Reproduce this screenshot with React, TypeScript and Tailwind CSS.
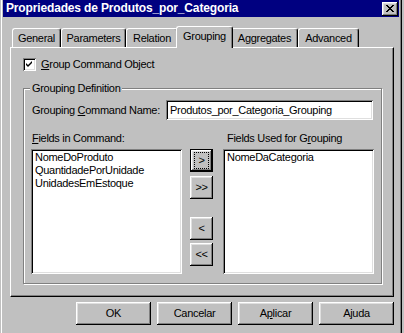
import React from "react";

const raised =
  "shadow-[inset_-1px_-1px_#000,inset_1px_1px_#fff,inset_-2px_-2px_#808080,inset_2px_2px_#dfdfdf]";
const sunken =
  "shadow-[inset_1px_1px_#808080,inset_-1px_-1px_#fff,inset_2px_2px_#000,inset_-2px_-2px_#dfdfdf]";

type Tab = { label: string; cls: string; sel?: boolean };

const tabs: Tab[] = [
  { label: "General", cls: "w-[49px]" },
  { label: "Parameters", cls: "w-[65px]" },
  { label: "Relation", cls: "w-[52px]" },
  { label: "Grouping", cls: "w-[57px]", sel: true },
  { label: "Aggregates", cls: "w-[67px]" },
  { label: "Advanced", cls: "w-[61px]" },
];

function TabItem({ t }: { t: Tab }) {
  if (t.sel) {
    return (
      <div
        className={`${t.cls} -mx-[2px] h-[22px] -mb-[1px] relative z-10 bg-[#c0c0c0] border-t border-l border-r border-t-white border-l-white border-r-black rounded-t-[3px] shadow-[inset_-1px_0_#808080] flex items-center justify-center pb-[2px] whitespace-nowrap`}
      >
        {t.label}
      </div>
    );
  }
  return (
    <div
      className={`${t.cls} h-[19px] bg-[#c0c0c0] border-t border-l border-r border-t-white border-l-white border-r-black rounded-t-[3px] shadow-[inset_-1px_0_#808080] flex items-center justify-center whitespace-nowrap`}
    >
      {t.label}
    </div>
  );
}

function ArrowBtn({ label, def, cls }: { label: string; def?: boolean; cls?: string }) {
  if (def) {
    return (
      <div className={`w-[23px] h-[23px] border border-black ${cls ?? ""}`}>
        <div className={`w-full h-full ${raised} flex items-center justify-center`}>
          <span className="w-[15px] h-[17px] border border-dotted border-black flex items-center justify-center leading-none">
            {label}
          </span>
        </div>
      </div>
    );
  }
  return (
    <div className={`w-[23px] h-[23px] ${raised} flex items-center justify-center leading-none ${cls ?? ""}`}>
      {label}
    </div>
  );
}

function Btn({ children }: { children: React.ReactNode }) {
  return (
    <div className={`w-[75px] h-[23px] ${raised} flex items-center justify-center`}>{children}</div>
  );
}

export default function App() {
  return (
    <div className="w-[404px] h-[333px] bg-[#c0c0c0] overflow-hidden flex text-[11px] leading-[13px] tracking-[-0.3px] text-black font-['Liberation_Sans',Arial,sans-serif] shadow-[inset_1px_0_#c0c0c0,inset_2px_0_#fff]">
      <div className="w-[3px] shrink-0" />
      <div className="w-[396px] shrink-0 flex flex-col">
        {/* Title bar */}
        <div className="h-[17px] bg-[#000080] flex items-center justify-between pl-[3px] pr-[1px]">
          <span className="text-white font-bold text-[12px] tracking-[-0.15px] whitespace-nowrap">
            Propriedades de Produtos_por_Categoria
          </span>
          <div className={`w-[16px] h-[14px] bg-[#c0c0c0] ${raised} flex items-center justify-center pb-[1px]`}>
            <svg width="8" height="7" viewBox="0 0 8 7">
              <path d="M0 0h2v1h1v1h2v-1h1v-1h2v1h-1v1h-1v1h-1v1h1v1h1v1h1v1h-2v-1h-1v-1h-2v1h-1v1h-2v-1h1v-1h1v-1h1v-1h-1v-1h-1v-1h-1z" fill="#000" />
            </svg>
          </div>
        </div>

        {/* Tabs */}
        <div className="mt-[9px] ml-[7px] pl-[2px] h-[21px] flex items-end">
          {tabs.map((t) => (
            <TabItem key={t.label} t={t} />
          ))}
        </div>

        {/* Panel */}
        <div className="ml-[7px] w-[384px] h-[250px] border border-t-white border-l-white border-r-black border-b-black shadow-[inset_-1px_-1px_#808080] flex flex-col pl-[12px] pt-[10px]">
          <div className="h-[13px] flex items-center">
            <div className={`w-[13px] h-[13px] bg-white ${sunken} flex items-center justify-center`}>
              <svg width="7" height="7" viewBox="0 0 7 7">
                <path d="M0 2L2 4L6 0V2L2 6L0 4Z" fill="#000" />
              </svg>
            </div>
            <span className="ml-[5px] whitespace-nowrap">
              <span className="underline">G</span>roup Command Object
            </span>
          </div>

          {/* Group box */}
          <div className="relative mt-[17px] w-[359px] h-[196px] border border-[#808080] shadow-[inset_1px_1px_#fff,1px_1px_#fff] flex flex-col">
            <span className="absolute top-[-7px] left-[6px] px-[2px] bg-[#c0c0c0] whitespace-nowrap">
              Grouping Definition
            </span>

            <div className="mt-[11px] pl-[8px] pr-[8px] flex items-center justify-between">
              <span className="whitespace-nowrap">
                Grouping <span className="underline">C</span>ommand Name:
              </span>
              <div className={`w-[207px] h-[20px] bg-white ${sunken} flex items-center pl-[4px] whitespace-nowrap`}>
                Produtos_por_Categoria_Grouping
              </div>
            </div>

            <div className="mt-[12px] pl-[7px] flex">
              <div className="w-[151px] flex flex-col">
                <span className="pl-[1px] whitespace-nowrap">
                  <span className="underline">F</span>ields in Command:
                </span>
                <div className={`mt-[4px] h-[125px] bg-white ${sunken} pl-[4px] pt-[2px] flex flex-col`}>
                  <span>NomeDoProduto</span>
                  <span>QuantidadePorUnidade</span>
                  <span>UnidadesEmEstoque</span>
                </div>
              </div>
              <div className="ml-[8px] w-[23px] pt-[17px] flex flex-col">
                <ArrowBtn label=">" def />
                <ArrowBtn label=">>" cls="mt-[4px]" />
                <ArrowBtn label="<" cls="mt-[18px]" />
                <ArrowBtn label="<<" cls="mt-[3px]" />
              </div>
              <div className="ml-[10px] w-[151px] flex flex-col">
                <span className="pl-[4px] whitespace-nowrap">
                  Fields Used for G<span className="underline">r</span>ouping
                </span>
                <div className={`mt-[4px] h-[125px] bg-white ${sunken} pl-[4px] pt-[2px] flex flex-col`}>
                  <span>NomeDaCategoria</span>
                </div>
              </div>
            </div>
          </div>
        </div>

        {/* Bottom buttons */}
        <div className="mt-[5px] ml-[7px] w-[384px] flex justify-end gap-[6px]">
          <Btn>OK</Btn>
          <Btn>Cancelar</Btn>
          <Btn>
            <span>
              A<span className="underline">p</span>licar
            </span>
          </Btn>
          <Btn>Ajuda</Btn>
        </div>
      </div>
      <div className="w-[1px] shrink-0" />
      <div className="w-[1px] shrink-0 bg-[#808080]" />
      <div className="w-[1px] shrink-0 bg-black" />
    </div>
  );
}
